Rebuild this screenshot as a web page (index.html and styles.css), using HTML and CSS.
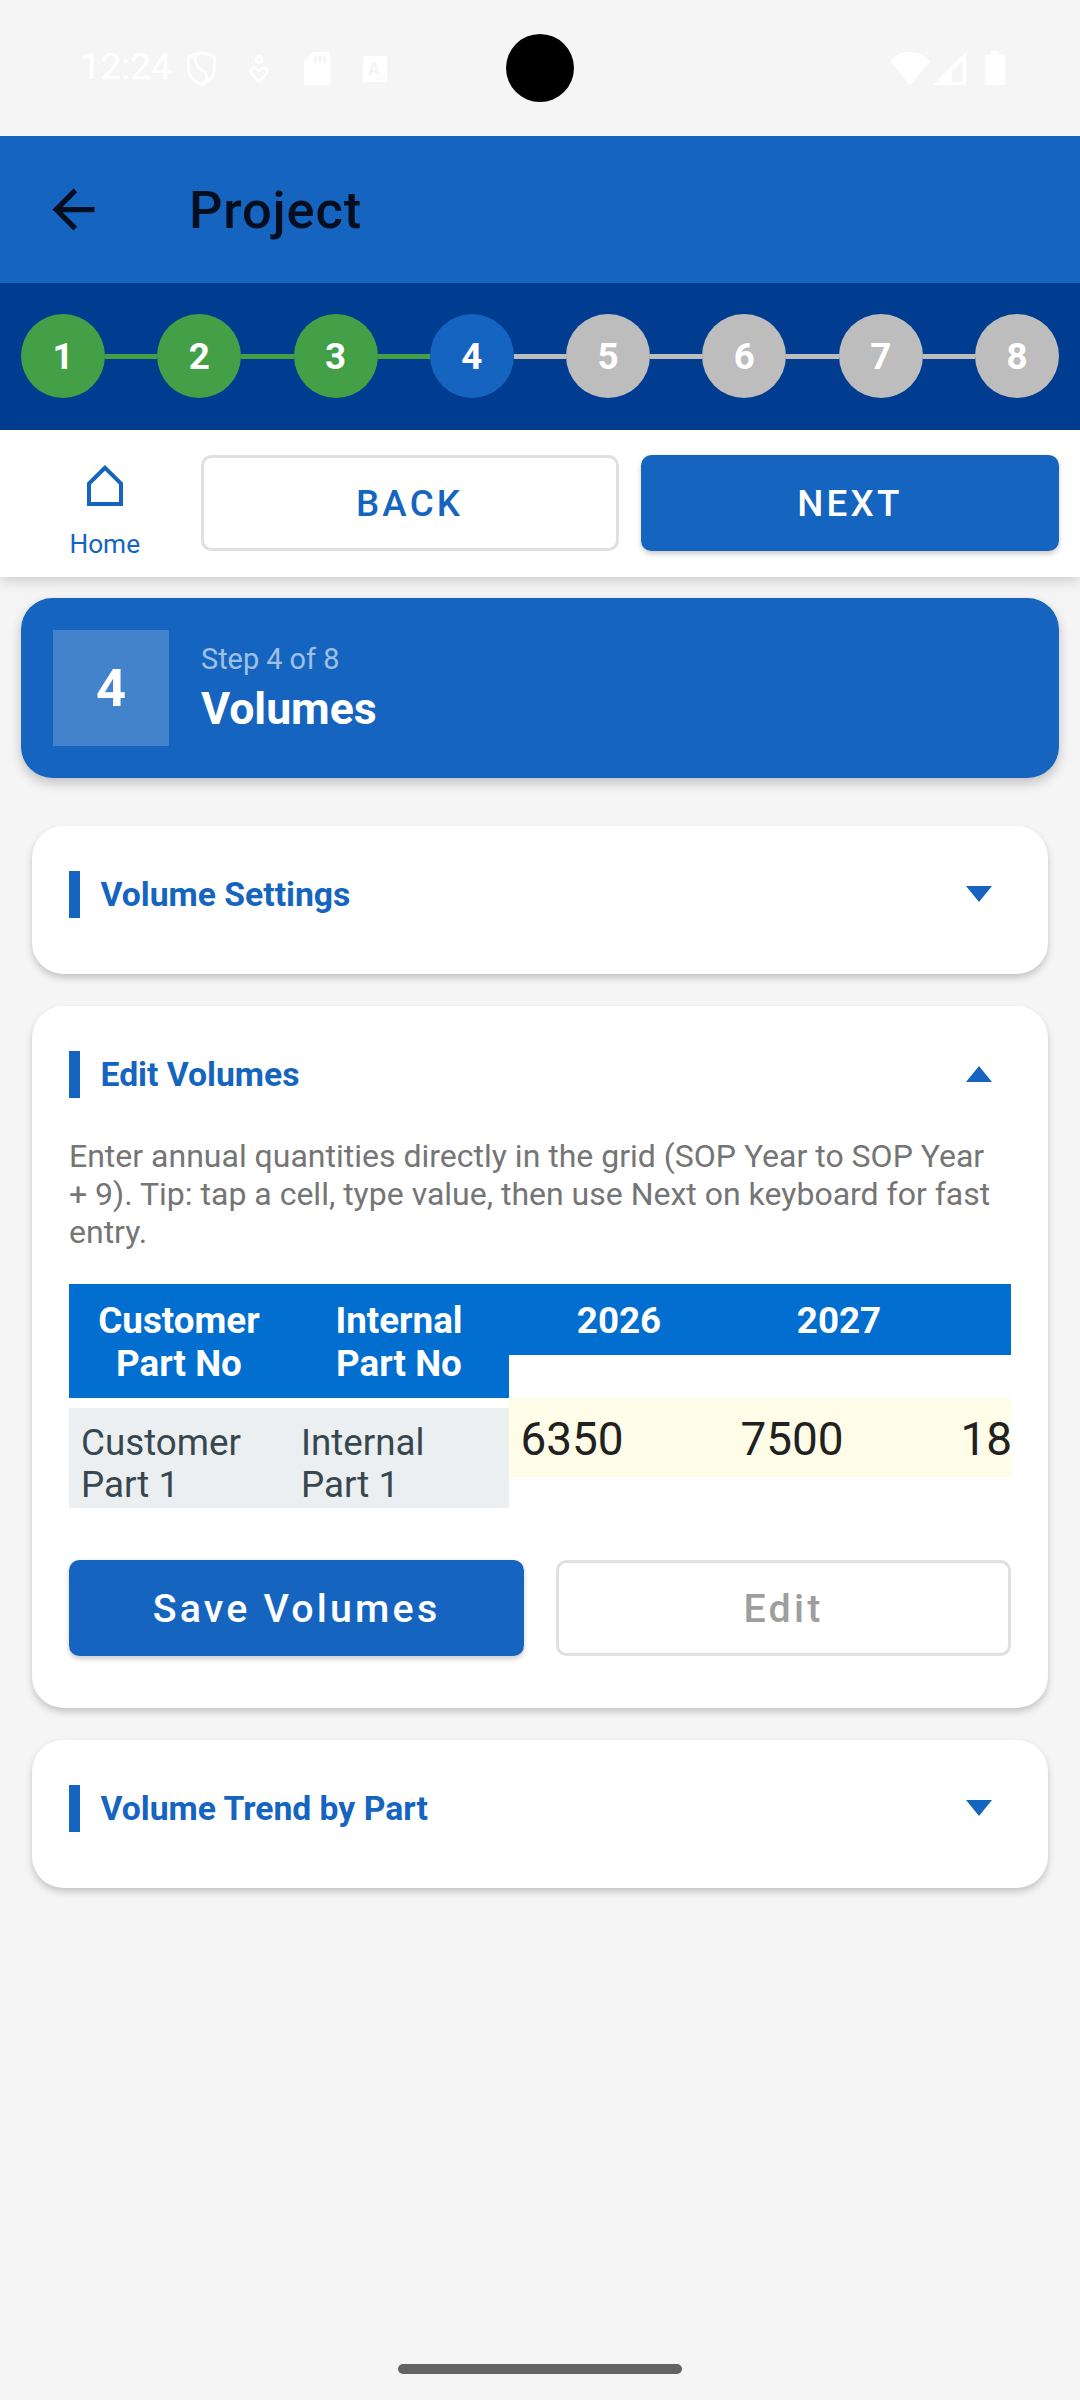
FILE: index.html
```html
<!DOCTYPE html>
<html lang="en">
<head>
<meta charset="utf-8">
<title>Project</title>
<link rel="stylesheet" href="styles.css">
</head>
<body>
<div class="statusbar">
  <span class="time">12:24</span>
  <svg class="ic ic-shield" viewBox="0 0 29 35"><path class="ol" d="M14.5 1.5 27.5 6v11c0 8-5.500 14-13 16.500C7 31 1.500 25 1.500 17V6Z"/><path class="ol" d="M9.500 4C6.500 11 9 15 14 18.500 19 21.500 23 26 16 33"/></svg>
  <svg class="ic ic-heart" viewBox="0 0 20 28"><circle class="ol" cx="10" cy="4.500" r="3.200"/><path class="ol" d="M10 26.500 2.500 18.500C0 15 3 12.500 6 13c2 .5 3 2 4 3 1-1 2-2.500 4-3 3-.5 6 2 3.500 5.500Z"/></svg>
  <svg class="ic ic-sd" viewBox="0 0 26 33"><path class="fl" fill-rule="evenodd" d="M9 0H24a2 2 0 0 1 2 2V31a2 2 0 0 1-2 2H2a2 2 0 0 1-2-2V9ZM10 3.500V10H13V3.500ZM14.500 3.500V10H17.500V3.500ZM19 3.500V10H22V3.500Z"/></svg>
  <svg class="ic ic-a" viewBox="0 0 24 26"><rect class="fl" width="24" height="26" rx="1.500"/><text class="ic-a-letter" x="11" y="19">A</text><rect class="cut" x="14" y="21.500" width="2" height="2"/><rect class="cut" x="17" y="21.500" width="2" height="2"/><rect class="cut" x="20" y="21.500" width="2" height="2"/></svg>
  <div class="status-right">
    <svg class="ic ic-wifi" viewBox="0 0 40 33"><path class="fl" d="M0 9.500C5 3 12 0 20 0s15 3 20 9.500L20 33Z"/></svg>
    <svg class="ic ic-signal" viewBox="0 0 33 33"><path class="fl" d="M33 0V33H0Z"/><path class="cut" d="M19 30H29.500V9L19 19.500Z"/></svg>
    <svg class="ic ic-battery" viewBox="0 0 20 34"><path class="fl" d="M6 0h8v3.500h4.500A1.500 1.500 0 0 1 20 5V32.500A1.500 1.500 0 0 1 18.500 34H1.500A1.500 1.500 0 0 1 0 32.500V5A1.500 1.500 0 0 1 1.500 3.500H6Z"/></svg>
  </div>
  <div class="camera"></div>
</div>

<header class="appbar">
  <svg class="back-icon" viewBox="0 0 24 24"><path d="M20 11H7.830l5.590-5.590L12 4l-8 8 8 8 1.410-1.410L7.830 13H20v-2z"/></svg>
  <h1 class="appbar-title">Project</h1>
</header>

<nav class="stepper">
  <div class="dot dot-done">1</div><div class="line line-done"></div>
  <div class="dot dot-done">2</div><div class="line line-done"></div>
  <div class="dot dot-done">3</div><div class="line line-done"></div>
  <div class="dot dot-active">4</div><div class="line"></div>
  <div class="dot">5</div><div class="line"></div>
  <div class="dot">6</div><div class="line"></div>
  <div class="dot">7</div><div class="line"></div>
  <div class="dot">8</div>
</nav>

<div class="toolbar">
  <div class="home-tab">
    <svg class="home-icon" viewBox="0 0 36 41"><path d="M18 2.800 2 18.500V39H34V18.500Z"/></svg>
    <span class="home-label">Home</span>
  </div>
  <button class="btn btn-outline btn-nav">BACK</button>
  <button class="btn btn-solid btn-nav">NEXT</button>
</div>

<main class="content">
  <section class="step-card">
    <div class="step-num">4</div>
    <div class="step-text">
      <div class="step-sub">Step 4 of 8</div>
      <div class="step-title">Volumes</div>
    </div>
  </section>

  <section class="card card-first">
    <div class="card-head">
      <div class="bar"></div>
      <h2 class="card-title">Volume Settings</h2>
      <svg class="caret" viewBox="0 0 26 16"><path d="M0 0H26L13 16Z"/></svg>
    </div>
  </section>

  <section class="card card-open">
    <div class="card-head">
      <div class="bar"></div>
      <h2 class="card-title">Edit Volumes</h2>
      <svg class="caret" viewBox="0 0 26 16"><path d="M0 16H26L13 0Z"/></svg>
    </div>
    <p class="desc">Enter annual quantities directly in the grid (SOP Year to SOP Year + 9). Tip: tap a cell, type value, then use Next on keyboard for fast entry.</p>
    <div class="grid">
      <div class="frozen">
        <div class="frozen-head">
          <div class="th">Customer Part No</div>
          <div class="th">Internal Part No</div>
        </div>
        <div class="frozen-row">
          <div class="td">Customer Part 1</div>
          <div class="td">Internal Part 1</div>
        </div>
      </div>
      <div class="scroll">
        <div class="year-head">
          <div class="th">2026</div>
          <div class="th">2027</div>
          <div class="th"></div>
        </div>
        <div class="year-row">
          <div class="cell">6350</div>
          <div class="cell">7500</div>
          <div class="cell">18</div>
        </div>
      </div>
    </div>
    <div class="actions">
      <button class="btn btn-solid btn-action">Save Volumes</button>
      <button class="btn btn-outline btn-action btn-disabled">Edit</button>
    </div>
  </section>

  <section class="card">
    <div class="card-head">
      <div class="bar"></div>
      <h2 class="card-title">Volume Trend by Part</h2>
      <svg class="caret" viewBox="0 0 26 16"><path d="M0 0H26L13 16Z"/></svg>
    </div>
  </section>
</main>

<div class="gesture"></div>
</body>
</html>
```

FILE: styles.css
```css
* { box-sizing: border-box; }
html, body { margin: 0; padding: 0; }
body {
  width: 1080px;
  height: 2400px;
  overflow: hidden;
  display: flex;
  flex-direction: column;
  background: #f5f5f5;
  font-family: Roboto, "Liberation Sans", sans-serif;
}

/* status bar */
.statusbar {
  position: relative;
  flex: none;
  height: 136px;
  display: flex;
  align-items: center;
  padding: 0 75px 0 80px;
  color: #fff;
}
.time { font-size: 36.75px; line-height: 1; margin-top: -1px; width: 92px; flex: none; }
.ic { display: block; flex: none; }
.fl { fill: #fff; }
.cut { fill: #f5f5f5; }
.ol { fill: none; stroke: #fff; stroke-width: 2.6; }
.ic-shield { width: 29px; height: 35px; margin-left: 15px; }
.ic-heart { width: 20px; height: 28px; margin-left: 33px; margin-top: 2px; }
.ic-sd { width: 26px; height: 33px; margin-left: 35px; }
.ic-a { width: 24px; height: 26px; margin-left: 33px; margin-top: 2px; }
.ic-a-letter { font-family: Roboto, sans-serif; font-size: 18px; font-weight: 700; fill: #f5f5f5; text-anchor: middle; }
.status-right { margin-left: auto; display: flex; align-items: center; }
.ic-wifi { width: 40px; height: 33px; }
.ic-signal { width: 33px; height: 33px; margin-left: 3px; }
.ic-battery { width: 20px; height: 34px; margin-left: 19px; }
.camera {
  position: absolute;
  left: 506px;
  top: 34px;
  width: 68px;
  height: 68px;
  border-radius: 50%;
  background: #000;
}

/* app bar */
.appbar {
  flex: none;
  height: 147px;
  background: #1565c0;
  display: flex;
  align-items: center;
  padding-left: 42px;
}
.back-icon { width: 63px; height: 63px; fill: #040e1f; flex: none; }
.appbar-title {
  margin: 0 0 0 84px;
  font-size: 52.5px;
  font-weight: 500;
  letter-spacing: .8px;
  color: #040e1f;
}

/* stepper */
.stepper {
  flex: none;
  height: 147px;
  background: #003c8f;
  display: flex;
  align-items: flex-start;
  padding: 31px 21px 0;
}
.dot {
  flex: none;
  width: 84px;
  height: 84px;
  border-radius: 50%;
  background: #bdbdbd;
  color: #fff;
  font-size: 36.75px;
  font-weight: 700;
  display: flex;
  align-items: center;
  justify-content: center;
}
.dot-done { background: #43a047; }
.dot-active { background: #1565c0; }
.line { flex: 1; height: 5.25px; margin-top: 39.5px; background: #bdbdbd; }
.line-done { background: #43a047; }

/* toolbar */
.toolbar {
  position: relative;
  flex: none;
  height: 147px;
  background: #fff;
  display: flex;
  align-items: flex-start;
  gap: 22px;
  padding: 25px 21px 0 0;
  box-shadow: 0 4px 12px rgba(0, 0, 0, .16);
}
.home-tab {
  flex: none;
  width: 178.5px;
  padding-left: 31px;
  display: flex;
  flex-direction: column;
  align-items: center;
  color: #1565c0;
}
.home-icon { width: 36px; height: 41px; margin-top: 10px; margin-left: 1px; display: block; }
.home-icon path { fill: none; stroke: #1565c0; stroke-width: 4; }
.home-label { font-size: 26.25px; line-height: 31px; margin-top: 23px; }

.btn {
  display: flex;
  align-items: center;
  justify-content: center;
  font-family: Roboto, "Liberation Sans", sans-serif;
  font-weight: 500;
  border-radius: 10.5px;
  padding: 0;
}
.btn-solid {
  background: #1565c0;
  color: #fff;
  border: none;
  box-shadow: 0 2.6px 5px rgba(0, 0, 0, .2);
}
.btn-outline {
  background: #fff;
  color: #1565c0;
  border: 3px solid #e0e0e0;
}
.btn-nav {
  flex: 1 1 418px;
  height: 96px;
  font-size: 36.75px;
  letter-spacing: 3.2px;
}
.btn-action {
  flex: 1 1 455px;
  height: 96px;
  font-size: 39.375px;
  letter-spacing: 3.2px;
}
.btn-disabled { color: #9e9e9e; }

/* content */
.content { flex: none; padding: 21px; }
.step-card {
  height: 180px;
  border-radius: 31.5px;
  background: #1565c0;
  display: flex;
  padding: 32px;
  gap: 32px;
  box-shadow: 0 5px 12px rgba(0, 0, 0, .22);
}
.step-num {
  flex: none;
  width: 116px;
  height: 116px;
  background: rgba(255, 255, 255, .2);
  color: #fff;
  font-size: 52.5px;
  font-weight: 700;
  display: flex;
  align-items: center;
  justify-content: center;
}
.step-sub {
  font-size: 28.875px;
  line-height: 34px;
  margin-top: 12px;
  color: rgba(255, 255, 255, .6);
}
.step-title {
  font-size: 44.625px;
  line-height: 52px;
  margin-top: 7px;
  font-weight: 700;
  color: #fff;
}

.card {
  margin: 32px 11px 0;
  min-height: 148px;
  background: #fff;
  border-radius: 31.5px;
  padding: 45px 37px 0;
  box-shadow: 0 4px 7px rgba(0, 0, 0, .2);
}
.card-first { margin-top: 48px; }
.card-open { padding-bottom: 52px; }
.card-head { display: flex; align-items: center; height: 47px; }
.bar { flex: none; width: 10.5px; height: 47px; background: #1565c0; }
.card-title {
  flex: 1;
  margin: 0 0 0 21px;
  font-size: 33.7px;
  font-weight: 700;
  color: #1565c0;
}
.caret { flex: none; width: 26px; height: 16px; fill: #1565c0; margin: -1px 19px 0 0; }

.desc {
  margin: 39px 0 33px;
  max-width: 930px;
  font-size: 32px;
  line-height: 38px;
  color: #757575;
}

.grid { display: flex; }
.frozen { flex: none; width: 440px; }
.frozen-head {
  display: flex;
  height: 114px;
  background: #026ecf;
}
.frozen-head .th { width: 220px; }
.th {
  flex: none;
  padding: 15px 10.5px 0;
  text-align: center;
  font-size: 36.75px;
  line-height: 43px;
  font-weight: 700;
  color: #fff;
}
.frozen-row {
  display: flex;
  height: 100px;
  margin-top: 10px;
  background: #eceff1;
  overflow: hidden;
}
.td {
  flex: none;
  width: 220px;
  padding: 13.7px 10.5px 0 12px;
  font-size: 36.75px;
  line-height: 42.7px;
  color: #37474f;
}
.scroll { flex: 1; min-width: 0; overflow: hidden; }
.year-head { display: flex; width: 660px; height: 71px; background: #026ecf; }
.year-head .th { width: 220px; }
.year-row { display: flex; width: 660px; height: 79px; margin-top: 43px; background: #fffde7; }
.cell {
  flex: none;
  width: 220px;
  padding: 15px 10.5px 0 11.5px;
  font-size: 45.9px;
  line-height: 52px;
  color: #212121;
}
.actions { display: flex; gap: 32px; margin-top: 52px; }

/* gesture handle */
.gesture {
  flex: none;
  width: 284px;
  height: 10.5px;
  margin: auto auto 26px;
  border-radius: 6px;
  background: #636363;
}
```
